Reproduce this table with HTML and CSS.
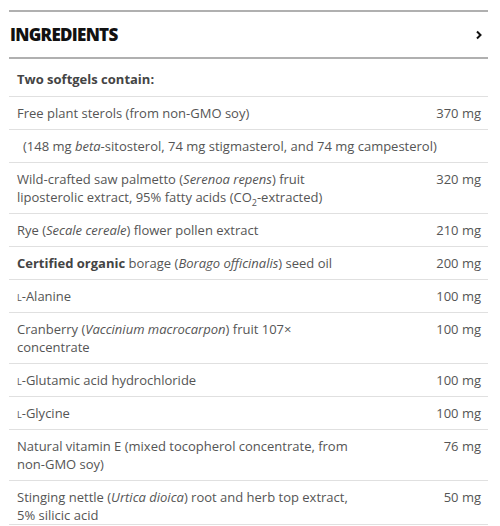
FILE: index.html
```html
<!DOCTYPE html>
<html>
<head>
<meta charset="utf-8">
<link rel="stylesheet" href="styles.css">
</head>
<body>
<div class="panel">
  <div class="head">
    <h2 class="title">INGREDIENTS</h2>
    <svg class="chev" width="8" height="10" viewBox="0 0 8 10"><path d="M2 1.5 L5.5 5 L2 8.5" fill="none" stroke="#111" stroke-width="2"/></svg>
  </div>
  <div class="rows">
    <div class="row lead"><span class="name">Two softgels contain:</span></div>
    <div class="row"><span class="name">Free plant sterols (from non-GMO soy)</span><span class="amt">370 mg</span></div>
    <div class="row note"><span class="name">(148 mg <i>beta</i>-sitosterol, 74 mg stigmasterol, and 74 mg campesterol)</span></div>
    <div class="row"><span class="name">Wild-crafted saw palmetto (<i>Serenoa repens</i>) fruit liposterolic extract, 95% fatty acids (CO<sub>2</sub>-extracted)</span><span class="amt">320 mg</span></div>
    <div class="row"><span class="name">Rye (<i>Secale cereale</i>) flower pollen extract</span><span class="amt">210 mg</span></div>
    <div class="row"><span class="name"><b>Certified organic</b> borage (<i>Borago officinalis</i>) seed oil</span><span class="amt">200 mg</span></div>
    <div class="row"><span class="name"><span class="sc">l</span>-Alanine</span><span class="amt">100 mg</span></div>
    <div class="row"><span class="name">Cranberry (<i>Vaccinium macrocarpon</i>) fruit 107× concentrate</span><span class="amt">100 mg</span></div>
    <div class="row"><span class="name"><span class="sc">l</span>-Glutamic acid hydrochloride</span><span class="amt">100 mg</span></div>
    <div class="row"><span class="name"><span class="sc">l</span>-Glycine</span><span class="amt">100 mg</span></div>
    <div class="row"><span class="name">Natural vitamin E (mixed tocopherol concentrate, from non-GMO soy)</span><span class="amt">76 mg</span></div>
    <div class="row"><span class="name">Stinging nettle (<i>Urtica dioica</i>) root and herb top extract, 5% silicic acid</span><span class="amt">50 mg</span></div>
  </div>
</div>
</body>
</html>
```
FILE: styles.css
```css
html, body {
  margin: 0;
  padding: 0;
  background: #fff;
}
body {
  font-family: "Open Sans", "Liberation Sans", sans-serif;
  overflow: hidden;
}
.panel {
  margin: 10px 12px 0 9px;
  height: 512px;
  overflow: hidden;
  border-top: 2px solid #b0b0b0;
  border-bottom: 1px solid #e0e0e0;
}
.head {
  display: flex;
  align-items: center;
  justify-content: space-between;
  height: 45px;
  border-bottom: 2px solid #b0b0b0;
  padding: 0 5px 0 1px;
}
.title {
  margin: 0;
  font-size: 17px;
  font-weight: 800;
  color: #111;
  letter-spacing: -0.7px;
}
.chev {
  display: block;
}
.row {
  display: grid;
  grid-template-columns: 342px 1fr;
  align-items: start;
  padding: 7px 7px 7px 8px;
  border-bottom: 1px solid #e0e0e0;
  font-size: 13px;
  line-height: 18px;
  color: #555;
}
.row.lead {
  padding: 11px 8px 8px 8px;
  font-weight: 700;
  color: #444;
}
.row.note .name {
  grid-column: 1 / 3;
  padding-left: 6px;
}
.amt {
  text-align: right;
}
.row b {
  font-weight: 700;
  color: #444;
}
.sc {
  font-variant: small-caps;
}
sub {
  font-size: 9px;
  line-height: 0;
}
```
